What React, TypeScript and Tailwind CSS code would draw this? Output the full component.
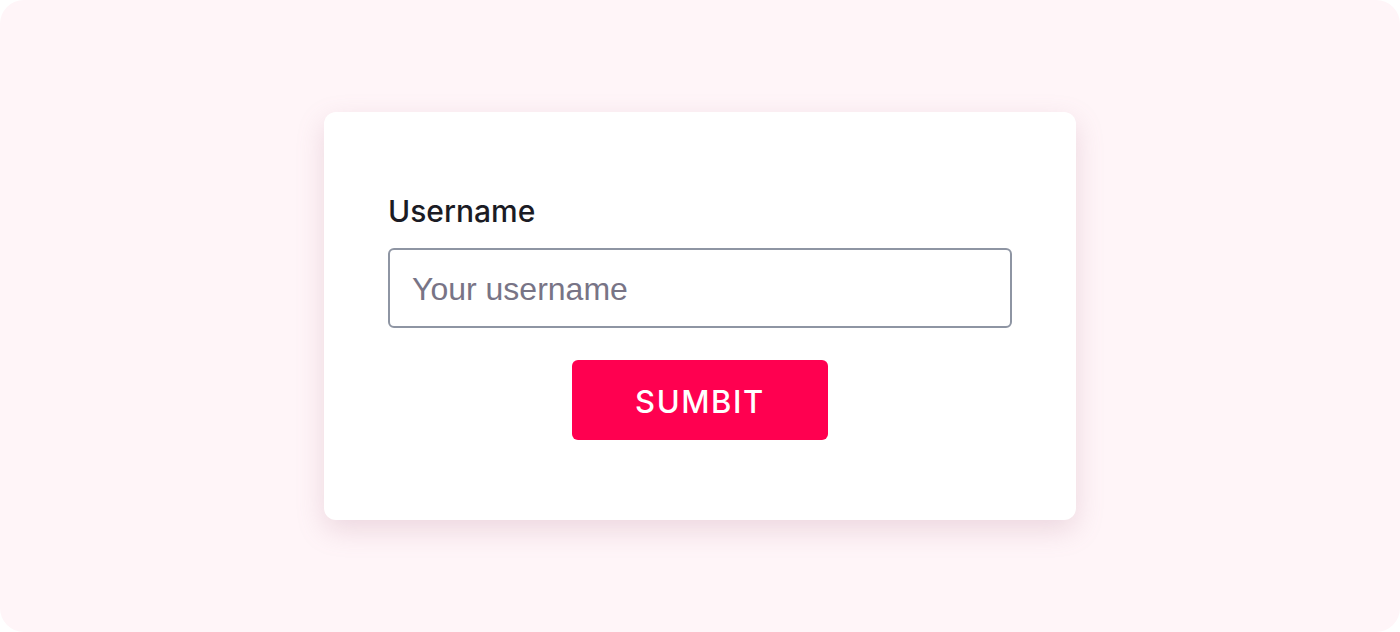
export default function App() {
  return (
    <div className="w-[1400px] h-[632px] bg-white">
      <div className="w-full h-full rounded-3xl bg-[#fff5f8] flex items-center justify-center">
        <div className="w-[752px] h-[408px] bg-white rounded-xl shadow-[0_10px_28px_rgba(170,110,135,0.22)] px-16 pt-[82px] flex flex-col">
          <label
            htmlFor="username"
            className="block text-[30px] leading-[34px] font-medium text-[#1b1b24] mb-5 font-['Inter',sans-serif]"
          >
            Username
          </label>
          <input
            id="username"
            type="text"
            placeholder="Your username"
            className="w-full h-20 rounded-md border-2 border-[#8e95a3] px-[22px] pt-0.5 text-[32px] text-[#1b1b24] placeholder:text-[#787486] outline-none font-['Liberation_Sans',Arial,sans-serif]"
          />
          <div className="flex justify-center mt-8">
            <button className="w-64 h-20 pt-1 rounded-md bg-[#ff0050] text-white text-[31px] font-medium tracking-[1.6px] font-['Inter',sans-serif]">
              SUMBIT
            </button>
          </div>
        </div>
      </div>
    </div>
  );
}
